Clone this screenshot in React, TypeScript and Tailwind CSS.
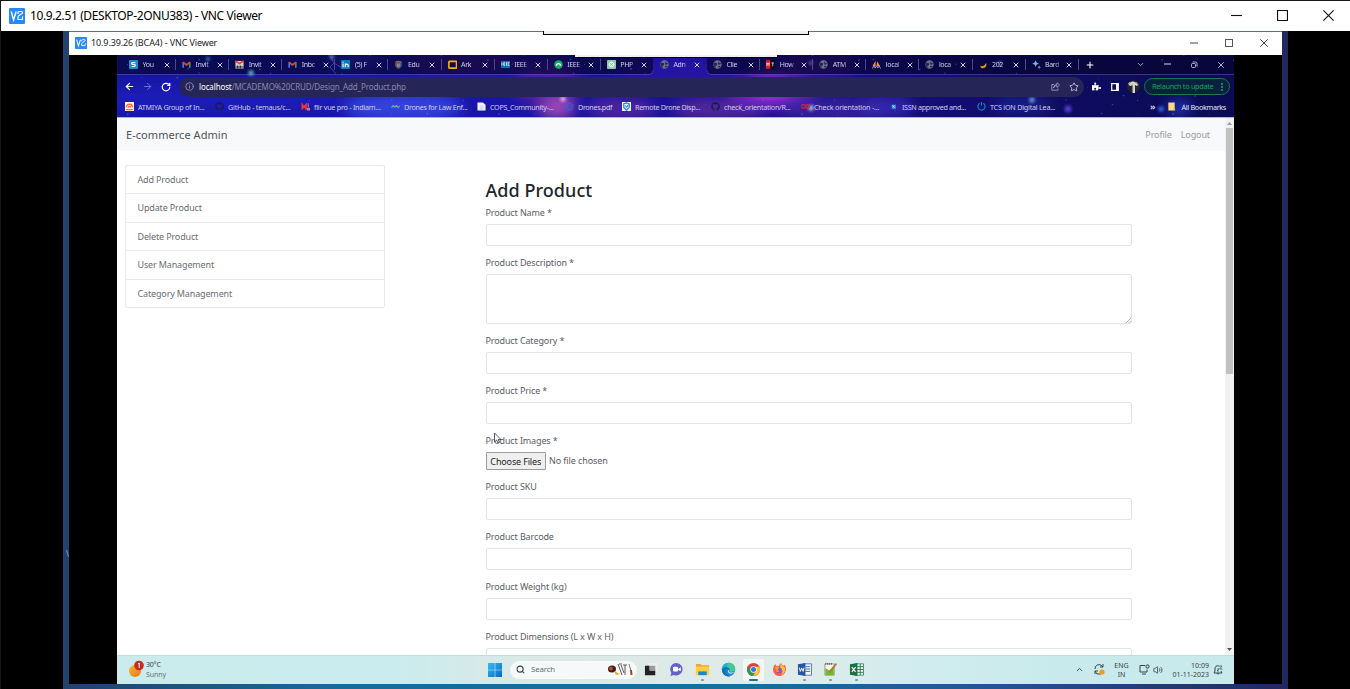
import React from "react";
import { ArrowLeft, ArrowRight, RotateCw, Info, Star, Plus, ChevronDown, ChevronUp, X, Search, MoreVertical, Volume2 } from "lucide-react";
import { FaPuzzlePiece, FaGithub } from "react-icons/fa";

const segoe = "font-['Noto_Sans',sans-serif]";

function VncLogo({ className }: { className: string }) {
  return (
    <svg viewBox="0 0 16 16" className={className}>
      <rect width="16" height="16" rx="1" fill="#2689f5" />
      <path d="M2.200 3.500l2.400 8.300L7.200 3.500" fill="none" stroke="#fff" strokeWidth="1.400" />
      <path d="M9 6V4.500q0-1 1-1h2.500q1 0 1 1t-1 1.300L10 7.500q-1 .6-1 1.700v2.300h4.500V8.500" fill="none" stroke="#fff" strokeWidth="1.200" />
    </svg>
  );
}

function WindowButtons({ className, size }: { className: string; size: number }) {
  return (
    <div className={className}>
      <svg width={size} height={size} viewBox="0 0 10 10"><path d="M0 5h10" stroke="#111" /></svg>
      <svg width={size} height={size} viewBox="0 0 10 10"><path d="M.5.5h9v9h-9z" fill="none" stroke="#111" /></svg>
      <svg width={size} height={size} viewBox="0 0 10 10"><path d="M.3.300l9.400 9.400M9.700.3L.3 9.700" stroke="#111" /></svg>
    </div>
  );
}

function Galaxy() {
  const stars = Array.from({ length: 170 }, (_, i) => ({
    x: (i * 197.3 + (i % 7) * 31) % 1117,
    y: (i * 29.7 + (i % 5) * 11) % 63,
    r: 0.3 + (i % 4) * 0.18,
  }));
  const clouds: [number, number, number, number, string, number][] = [
    [60, 45, 170, 22, "#2022c8", 0.5],
    [285, 52, 60, 22, "#4055f0", 0.7],
    [235, 5, 28, 12, "#3c46e8", 0.6],
    [348, 8, 60, 14, "#5a1c88", 0.6],
    [430, 30, 34, 34, "#6c28a8", 0.6],
    [440, 52, 18, 18, "#d060c0", 0.65],
    [505, 54, 35, 16, "#8438a8", 0.5],
    [560, 20, 60, 26, "#2c18a8", 0.7],
    [600, 54, 46, 16, "#6c30a0", 0.7],
    [655, 36, 44, 26, "#8a2cd0", 0.75],
    [655, 34, 20, 14, "#d850f0", 0.55],
    [700, 10, 40, 18, "#5a1ca0", 0.55],
    [715, 55, 50, 18, "#4a2ca8", 0.6],
    [770, 52, 26, 16, "#4030c0", 0.7],
    [905, 50, 30, 14, "#2030a8", 0.5],
    [1062, 53, 12, 10, "#3050f0", 0.7],
  ];
  const bright: [number, number, number, string][] = [
    [134, 18, 4, "#6cc8d0"], [91, 4, 3, "#4c98b0"], [215, 2, 3, "#8a98f0"], [446, 44, 4, "#f0b8e8"],
    [694, 53, 4, "#b8d8f0"], [694, 8, 3, "#6c60d8"], [915, 45, 4, "#78a8f0"], [951, 54, 5, "#6040e0"], [1044, 54, 4, "#3c70ff"], [883, 8, 3, "#5060b0"],
  ];
  return (
    <svg className="absolute inset-0 h-full w-full" viewBox="0 0 1117 63" preserveAspectRatio="none">
      <defs>
        <linearGradient id="sky">
          <stop offset="0" stopColor="#1517a0" />
          <stop offset=".3" stopColor="#1916a8" />
          <stop offset=".65" stopColor="#180f88" />
          <stop offset=".82" stopColor="#0f0c62" />
          <stop offset="1" stopColor="#0b0b54" />
        </linearGradient>
        <filter id="haze" x="-50%" y="-50%" width="200%" height="200%"><feGaussianBlur stdDeviation="7" /></filter>
        <filter id="glow" x="-100%" y="-100%" width="300%" height="300%"><feGaussianBlur stdDeviation="1.5" /></filter>
      </defs>
      <rect width="1117" height="63" fill="url(#sky)" />
      {clouds.map(([x, y, rx, ry, c, o], i) => <ellipse key={i} cx={x} cy={y} rx={rx} ry={ry * 0.7} fill={c} opacity={o} filter="url(#haze)" />)}
      <path d="M0 0H536V15q0 4-4 4H0zM590 0H1117V19H594q-4 0-4-4z" fill="#06052e" opacity=".66" />
      <path d="M0 19.500H532q4 0 4-4M590 15.500q0 4 4 4H1117" fill="none" stroke="#5b55a8" strokeWidth=".8" opacity=".7" />
      {stars.map((s, i) => <circle key={i} cx={s.x} cy={s.y} r={s.r} fill="#9ca4ff" opacity=".34" />)}
      {bright.map(([x, y, r, c], i) => <circle key={i} cx={x} cy={y} r={r * 0.7} fill={c} filter="url(#glow)" opacity=".85" />)}
      <path d="M212 0l5 8-4 4 6 7M217 8l8 5" stroke="#5264e8" strokeWidth="1" fill="none" opacity=".6" />
    </svg>
  );
}

function Favicon({ kind }: { kind: string }) {
  const body: Record<string, React.ReactNode> = {
    s: <><rect width="10" height="10" rx="1" fill="#168dcc" /><path d="M7 3H4Q2.800 3 3 4t1.200 1h1.600Q7 5 7 6T5.800 7.200H3" fill="none" stroke="#fff" strokeWidth="1.300" /></>,
    gmail: <><path d="M1.300 8.500V2.500" stroke="#4285f4" strokeWidth="1.700" /><path d="M8.700 8.500V2.500" stroke="#34a853" strokeWidth="1.700" /><path d="M1 2.500L5 5.600l4-3.100" fill="none" stroke="#ea4335" strokeWidth="1.900" /></>,
    mail2: <><rect x=".5" y="1" width="9" height="8.500" fill="#d4cfcb" /><path d="M.5 1L5 4 9.500 1" fill="none" stroke="#e33b2e" strokeWidth="1.800" /><path d="M.5 7.700h9M3 6v3.500M6 6v3.500" stroke="#333" strokeWidth="1.200" /></>,
    linkedin: <><rect width="10" height="10" rx=".7" fill="#0a7bbd" /><path d="M2.300 4v4M2.300 2v1M4.800 8V4M4.800 6Q5 4.500 6.500 4.500T8 6v2" stroke="#fff" strokeWidth="1.300" fill="none" /></>,
    edu: <><path d="M1 2l4-1.500L9 2v4q-1 3-4 4Q2 9 1 6z" fill="#454967" /><path d="M3 4h2v5L3 7z" fill="#ef7635" /><path d="M5 4h2v3L5 9z" fill="#29a6e0" /><path d="M2 2h6" stroke="#d16c46" /></>,
    slide: <rect x="1" y="1.500" width="8.500" height="7.500" rx=".5" fill="none" stroke="#f4b400" strokeWidth="1.800" />,
    ieee: <><rect y="1" width="10" height="8" fill="#0a6eae" /><path d="M1 3v3M3 3v3M3 3h1.500M3 4.500h1.500M3 6h1.500M6 3v3M6 3h1.200M6 6h1.200M8 3v3M8 3h1.500M8 6h1.500" stroke="#fff" strokeWidth=".8" /></>,
    green: <><circle cx="5" cy="5" r="4.700" fill="#0cae62" /><path d="M2.700 6.300a2.300 2.300 0 014.600 0" stroke="#fff" strokeWidth="1.600" fill="none" /></>,
    gpt: <><rect width="10" height="10" rx="1" fill="#8cc9ad" /><circle cx="5" cy="5" r="2.700" fill="#cfe8dc" stroke="#f2fff8" /><path d="M3 3l4 4M7 3L3 7" stroke="#79b59b" strokeWidth=".6" /></>,
    globe: <><circle cx="5" cy="5" r="4.600" fill="#6d7390" /><path d="M1 3l2.500 0 1.500 1.200L4 6l-1.500.5L3.500 9Q1 8 .8 5zM5.500 1l1 1.800L9 3.500 8 5l-2 .3zM5.500 7l2-.5L8.500 7 6.500 9z" fill="#25264a" /></>,
    mt: <><path fill="#e10d1c" d="M0 0h5v10H0z" /><path fill="#090909" d="M5 0h5v10H5z" /><path d="M1 7V3l1.200 2L3.500 3v4M6 3.300h3M7.500 3.300V7" stroke="#fff" strokeWidth=".8" fill="none" /></>,
    pma: <><path d="M.5 7L4 .8V7zM5 7l.8-5.500L9 7z" fill="#f29a24" /><path d="M.5 9.500L2 6.500l1.500 2.500L5 6.500 6.500 9 8 6.500l1.500 3" stroke="#99a1d1" fill="none" /></>,
    moon: <path d="M1 6q4 3 7-3 1 5-3 6Q2 9.500 1 6z" fill="#f69716" />,
    bard: <><path d="M4 0q.5 3.500 4 4-3.500.5-4 4-.5-3.500-4-4 3.500-.5 4-4z" fill="#7db0ff" /><path d="M8 6q.3 1.700 2 2-1.700.3-2 2-.3-1.700-2-2 1.700-.3 2-2z" fill="#e56ba0" /></>,
    atm: <><rect width="10" height="10" fill="#fff3ea" /><path d="M1.500 6a3.500 3.500 0 017 0M3.500 6.500a1.500 1.500 0 013 0M1 8.500h8" fill="none" stroke="#f0703c" strokeWidth="1.400" /></>,
    m: <><path d="M1.500 8.500V3l2 2.500 2-2.500v5.500" fill="none" stroke="#e33" strokeWidth="2" /><path d="M8 1.500v4.500M7 7h2.500v2H7z" stroke="#f6b0b0" strokeWidth=".8" fill="#d22" /></>,
    wave: <><path d="M.5 6L2.500 4l2 2" stroke="#2fc4a8" strokeWidth="1.500" fill="none" /><path d="M4.500 5.500l1.500-1.500 1.500 1.500" stroke="#e28a58" strokeWidth="1.500" fill="none" /><path d="M7 5l1 1.200 1.700-2" stroke="#379cf0" strokeWidth="1.500" fill="none" /></>,
    doc: <><path d="M.5.5h6l3 2.500v6.500h-9z" fill="#f1f1fa" /><path d="M3 4h4v5H3z" fill="#d7dbf4" /></>,
    sun: <><circle cx="5" cy="5" r="3.600" fill="none" stroke="#2f6fe7" strokeWidth="2" strokeDasharray="1 1.200" /><circle cx="5" cy="5" r="1.600" fill="none" stroke="#2f5fd7" /></>,
    shield: <><rect width="10" height="10" fill="#eaf4ff" /><path d="M2 2l3-1 3 1v4L5 9 2 6z" fill="none" stroke="#167fe0" strokeWidth="1.300" /><path d="M4 4l1 2 2-3" stroke="#145080" fill="none" /></>,
    co: <><circle cx="2.800" cy="5" r="2" fill="none" stroke="#d8232e" strokeWidth="1.300" /><circle cx="7.200" cy="5" r="2" fill="none" stroke="#d8232e" strokeWidth="1.300" /></>,
    cube: <><path d="M3 3h4.500v4.500H3z" fill="#34a7d2" /><path d="M4 4l2 2" stroke="#d5ffff" /></>,
    power: <path d="M3 1.500a4 4 0 104 0M5 0v4" stroke="#0d7ed0" strokeWidth="1.300" fill="none" />,
    folder: <><path d="M1.500.5h7v7l-1 2h-6z" fill="#fbdc82" /><path d="M7 7h2v2.500H7z" fill="#ecbc4d" /></>,
  };
  if (kind === "github") return <FaGithub className="size-[9px] shrink-0 text-[#1c1b4c]" />;
  return <svg viewBox="0 0 10 10" className="size-[9px] shrink-0">{body[kind]}</svg>;
}

const tabs: [string, string][] = [
  ["s", "You"], ["gmail", "Invit"], ["mail2", "Invit"], ["gmail", "Inbc"], ["linkedin", "(5) F"], ["edu", "Edu"], ["slide", "Ark"],
  ["ieee", "IEEE"], ["green", "IEEE"], ["gpt", "PHP"], ["globe", "Adn"], ["globe", "Clie"], ["mt", "How"], ["globe", "ATM"],
  ["pma", "local"], ["globe", "loca"], ["moon", "202"], ["bard", "Bard"],
];

const bookmarks: [string, string, string, string][] = [
  ["atm", "ATMIYA Group of In...", "w-[90px]", "tracking-[-0.25px]"],
  ["github", "GitHub - temaus/c...", "w-[86px]", "tracking-[-0.23px]"],
  ["m", "flir vue pro - Indiam...", "w-[90px]", "tracking-[-0.25px]"],
  ["wave", "Drones for Law Enf...", "w-[86px]", "tracking-[-0.3px]"],
  ["doc", "COPS_Community-...", "w-[88px]", "tracking-[-0.3px]"],
  ["sun", "Drones.pdf", "w-[57px]", "tracking-[-0.35px]"],
  ["shield", "Remote Drone Disp...", "w-[89px]", "tracking-[-0.33px]"],
  ["github", "check_orientation/R...", "w-[90px]", "tracking-[-0.29px]"],
  ["co", "Check orientation -...", "w-[88px]", "tracking-[-0.2px]"],
  ["cube", "ISSN approved and...", "w-[88px]", "tracking-[-0.32px]"],
  ["power", "TCS iON Digital Lea...", "w-[90px]", "tracking-[-0.23px]"],
];

function BrowserChrome() {
  return (
    <div className="relative h-[63px] overflow-hidden text-[#cfceea]">
      <Galaxy />
      <div className="relative flex h-full flex-col">
        <div className="flex h-[19px] items-center pl-[6px]">
          {tabs.map(([icon, label], i) => (
            <div key={i} className="relative flex h-full w-[53.100px] shrink-0 items-center pl-[6px]">
              <Favicon kind={icon} />
              <span className="ml-[4.500px] w-[16px] whitespace-nowrap text-[7px] leading-[12px] tracking-[-0.350px] [mask-image:linear-gradient(90deg,#000_60%,rgba(0,0,0,.25))]">{label}</span>
              <X className="ml-[4px] size-[8px] shrink-0" strokeWidth={3} />
              {i !== 9 && i !== 10 && <span className="absolute right-0 top-[4px] h-[11px] w-px bg-[#48488a]" />}
            </div>
          ))}
          <Plus className="ml-[6px] size-[10px] text-white" strokeWidth={2.500} />
          <ChevronDown className="ml-[41px] size-[9px]" />
          <svg className="ml-[19px] size-[7px]" viewBox="0 0 7 7"><path d="M0 3h7" stroke="#d6d5f0" /></svg>
          <svg className="ml-[19px] size-[8px]" viewBox="0 0 8 8"><rect x="1.500" y="2.500" width="4" height="4" rx="1" fill="none" stroke="#d6d5f0" strokeWidth=".8" /><path d="M2.500 1H5.500q1.500 0 1.500 1.500v3" fill="none" stroke="#d6d5f0" strokeWidth=".8" /></svg>
          <X className="ml-[18px] size-[10px]" />
        </div>
        <div className="mt-[2px] flex h-[21px] items-center pl-[7px]">
          <ArrowLeft className="size-[11px] text-white" strokeWidth={2.500} />
          <ArrowRight className="ml-[7px] size-[11px] text-[#6f76d8]" />
          <RotateCw className="ml-[8px] size-[10px] text-white" strokeWidth={3} />
          <div className="ml-[8px] flex h-[20px] w-[905px] items-center rounded-full bg-[#252558] pl-[6px] pr-[5px]">
            <Info className="size-[9px] text-[#a5a3c5]" />
            <span className="ml-[5px] text-[8px] tracking-[-0.130px] text-[#8987b0]"><span className="text-white">localhost</span>/MCADEMO%20CRUD/Design_Add_Product.php</span>
            <svg className="ml-auto size-[9px]" viewBox="0 0 9 9"><path d="M3 2.500H.8v5.700H7V6.500M2.500 6Q3 3.500 6 3.500V5.500L8.600 3 6 .8v1.400Q3 2.500 2.500 6z" fill="none" stroke="#aaa8c8" strokeWidth=".8" /></svg>
            <Star className="ml-[9px] size-[10px]" />
          </div>
          <FaPuzzlePiece className="ml-[8px] size-[9px] text-white" />
          <svg className="ml-[10px] size-[8px]" viewBox="0 0 8 8"><path d="M.7.7h6.600v6.600H.7z" fill="none" stroke="#fff" strokeWidth="1.200" /><path d="M5 1h2v6H5z" fill="#fff" /></svg>
          <svg className="ml-[8px] size-[13px]" viewBox="0 0 13 13"><circle cx="6.500" cy="6.500" r="6.300" fill="#252525" /><path d="M1.500 5Q3 1 6.500 1.500T11.500 5L9.500 6 8 5v8H5.500V5L3.500 6z" fill="#d2d2d2" /><path d="M1 4l2-2M9 2l2 3" stroke="#999" /></svg>
          <div className="ml-[4px] flex h-[17px] w-[86px] items-center rounded-full border border-[#1d7650] bg-[#08213c] pl-[7px] pr-[2px] text-[7.300px] text-[#22a05c]">
            <span className="whitespace-nowrap tracking-[-0.300px]">Relaunch to update</span>
            <MoreVertical className="ml-auto size-[10px]" strokeWidth={3} />
          </div>
        </div>
        <div className="flex h-[20px] items-center pl-[8px] text-[7.200px]">
          {bookmarks.map(([icon, label, w, tracking], i) => (
            <div key={i} className={`flex shrink-0 items-center gap-[4px] whitespace-nowrap ${w} ${tracking}`}>
              <Favicon kind={icon} /><span>{label}</span>
            </div>
          ))}
          <span className="ml-auto text-[9px] font-bold leading-[10px]">»</span>
          <span className="ml-[11px] mr-[8px] flex items-center gap-[6px] whitespace-nowrap tracking-[-0.300px] text-[#e6e5f6]"><Favicon kind="folder" />All Bookmarks</span>
        </div>
      </div>
      <div className="absolute inset-x-0 bottom-0 h-px bg-[#aeb0da]" />
    </div>
  );
}

function Label({ children }: { children: React.ReactNode }) {
  return <label className="block h-[16px] whitespace-nowrap text-[9px] leading-[16px] tracking-[-0.130px] text-[#5a6066]">{children}</label>;
}

function Field({ label, area }: { label: string; area?: boolean }) {
  return (
    <div className={area ? "h-[78px]" : "h-[50px]"}>
      <Label>{label}</Label>
      {area ? (
        <div className="relative mt-[3px] h-[50px] rounded-[2px] border border-[#e2e5e8] bg-white">
          <svg className="absolute bottom-0 right-0 size-[5px]" viewBox="0 0 6 6"><path d="M0 6l6-6M3 6l3-3" stroke="#888" strokeWidth=".8" /></svg>
        </div>
      ) : (
        <div className="mt-[3px] h-[22px] rounded-[2px] border border-[#e2e5e8] bg-white" />
      )}
    </div>
  );
}

function Page() {
  return (
    <div className="flex h-[537px] bg-white">
      <div className="relative min-w-0 flex-1 overflow-hidden">
        <header className="flex h-[33px] items-center bg-[#f8f9fa] pl-[9px] pr-[15px] pt-px">
          <span className="pt-px text-[11px] tracking-[0.050px] text-[#505458]">E-commerce Admin</span>
          <nav className="ml-auto flex gap-[9px] text-[9px] tracking-[-0.120px] text-[#989b9e]"><span>Profile</span><span>Logout</span></nav>
        </header>
        <div className="flex">
          <aside className="ml-[8px] mt-[14px] h-[143px] w-[260px] rounded-[2px] border border-[#e8e9ea]">
            {["Add Product", "Update Product", "Delete Product", "User Management", "Category Management"].map((t, i) => (
              <div key={t} className={`pl-[11.500px] text-[9px] leading-[27px] tracking-[-0.150px] text-[#6a6e73] ${i ? "h-[28.500px] border-t border-[#e9eaeb]" : "h-[27px]"}`}>{t}</div>
            ))}
          </aside>
          <main className="ml-[100.500px] mt-[26px] w-[646.500px]">
            <h1 className="h-[28px] text-[18px] font-medium leading-[27px] tracking-[0.050px] text-[#212529]">Add Product</h1>
            <Field label="Product Name *" />
            <Field label="Product Description *" area />
            <Field label="Product Category *" />
            <Field label="Product Price *" />
            <div className="h-[46px]">
              <Label>Product Images *</Label>
              <div className="mt-[3px] flex items-center text-[9px]">
                <button className="h-[18px] w-[60.500px] whitespace-nowrap rounded-[1px] border border-[#9c9c9c] bg-[#efefef] leading-[15px] tracking-[-0.150px] text-[#222]">Choose Files</button>
                <span className="ml-[3px] tracking-[-0.100px] text-[#5a6066]">No file chosen</span>
              </div>
            </div>
            <Field label="Product SKU" />
            <Field label="Product Barcode" />
            <Field label="Product Weight (kg)" />
            <Field label="Product Dimensions (L x W x H)" />
          </main>
        </div>
        <svg className="absolute left-[376px] top-[314px] h-[13px] w-[10px]" viewBox="0 0 10 13"><path d="M1.500 1v9l2.200-2 1.300 3 1.500-.7L5.200 7.500H8z" fill="#fff" stroke="#333" strokeWidth=".8" /></svg>
      </div>
      <div className="flex w-[9px] flex-col items-center bg-[#f1f1f1]">
        <svg className="h-[10px] w-[5px]" viewBox="0 0 5 10"><path d="M0 7l2.500-3L5 7z" fill="#999" /></svg>
        <div className="h-[246px] w-[7px] bg-[#c1c1c1]" />
        <svg className="mt-auto h-[10px] w-[5px]" viewBox="0 0 5 10"><path d="M0 3l2.500 3L5 3z" fill="#555" /></svg>
      </div>
    </div>
  );
}

function AppIcon({ kind }: { kind: string }) {
  const icons: Record<string, React.ReactNode> = {
    task: <><path d="M5 1h10v9H5z" fill="#eceeee" /><path d="M1 4h5v5h6v5H1z" fill="#222" /><path d="M6 4h6v5H6z" fill="#9c9c9c" /></>,
    chat: <><path d="M8 1a6.700 6.700 0 11-3 12.800L1.500 15l1-3.500A6.700 6.700 0 018 1z" fill="#6460c8" /><rect x="4.300" y="5" width="5.300" height="5" rx="1" fill="#fff" /><path d="M9.600 7.500l3-2v4.300l-3-1.500z" fill="#fff" /></>,
    files: <><path d="M1 2h5l1.500 1.500H15v10H1z" fill="#f1a91f" /><path d="M1 5h14v9H1z" fill="#ffce45" /><path d="M3.500 10h9v4h-9z" fill="#1787d4" /></>,
    edge: <><circle cx="8" cy="8" r="7.200" fill="#1689cf" /><path d="M1 7a7.200 7.200 0 0114-1q1 4-3.500 4.500-3 0-2.500-1 1-3-2-4-4-1-6 1.500z" fill="#45ca91" /><path d="M1 7Q2 1.500 8 1q-3 3 0 5Q4 4 1 7z" fill="#22aedb" /><path d="M5 8q-1 6 5.500 6.800Q4 17 1.500 11 0 6 5 5.500q4 0 4 3Q5 6 5 8z" fill="#0874b9" /><path d="M8.300 8.500q-.5 4 6 2.200Q11 14 8 11.500 6.500 9 8.300 8.500z" fill="#d7e9e7" /></>,
    chrome: <><circle cx="8" cy="8" r="7" fill="#e44134" /><path d="M2 4.500A7 7 0 007.500 15L11 9H4.800z" fill="#279b54" /><path d="M8 5h6.400A7 7 0 017.500 15l3.300-6z" fill="#f9c52c" /><circle cx="8" cy="8" r="3.400" fill="#fff" /><circle cx="8" cy="8" r="2.700" fill="#3579e6" /></>,
    firefox: <><path d="M2 4l2-2v2l3 .2L9.500 1q.5 2 3 3l1-1Q16 7 14 11q-2 4-6 4-5 0-6.500-4.500Q.5 7 2 4z" fill="#ff5a45" /><path d="M9.500 1q.5 3 3 4t1 5q-1 3-4 4 4-5-1-8z" fill="#ffc736" /><circle cx="7.300" cy="8.700" r="3.100" fill="#8952d8" /><path d="M3 5q2-1 5 1L6 8l2 2-3 1z" fill="#ff9432" /></>,
    word: <><rect x="7" y="2" width="8.500" height="12" fill="#f5f7fc" stroke="#2e5aa8" strokeWidth=".8" /><path d="M9 5h5M9 7.500h5M9 10h5" stroke="#3564b2" /><path d="M1 2.500L9 1v14l-8-1.500z" fill="#2855a4" /><path d="M2.500 6l1 4L5 6.500 6.500 10l1-4" stroke="#fff" fill="none" /></>,
    note: <><path d="M2 2h10v12H2z" fill="#f4f4e6" stroke="#777" strokeWidth=".7" /><path d="M2.500 6.500l4 2.500 5-3v8h-9z" fill="#73ba29" /><path d="M6 12l1-3 6.500-8 1.500 1.500L8 11z" fill="#a87a3c" /><path d="M3 1v2M5 1v2M7 1v2M9 1v2" stroke="#444" strokeWidth=".8" /></>,
    excel: <><rect x="7" y="2" width="8.500" height="12" fill="#f4faf5" stroke="#227548" strokeWidth=".8" /><path d="M8 5h7M8 8h7M8 11h7M12 2v12" stroke="#25794a" /><path d="M1 2.500L9 1v14l-8-1.500z" fill="#1b7143" /><path d="M3 5.500l4 5M7 5.500l-4 5" stroke="#fff" strokeWidth="1.200" /></>,
  };
  return <svg viewBox="0 0 16 16" className="size-[15px]">{icons[kind]}</svg>;
}

function Taskbar() {
  return (
    <footer className="flex h-[29px] items-center border-t border-[#bddcdd] bg-[linear-gradient(90deg,#cbebed_0%,#cbecee_25%,#dce8e5_38%,#e0ece9_60%,#d2ecef_70%,#c8eaec_85%)] pb-px text-[#394446]">
      <div className="flex w-[371px] items-center pl-[11px]">
        <svg className="mb-[3px] h-[19px] w-[17px]" viewBox="0 0 17 19">
          <defs><linearGradient id="sunny" x1="0" y1="0" x2="1" y2="1"><stop stopColor="#f8b62a" /><stop offset="1" stopColor="#ee7515" /></linearGradient></defs>
          <circle cx="7" cy="12" r="6" fill="url(#sunny)" /><circle cx="11" cy="6.500" r="4.800" fill="#c42b22" /><path d="M10 5l1.200-1v5" fill="none" stroke="#fff" />
        </svg>
        <div className="ml-px text-[7px] leading-[9.500px]"><div className="tracking-[-0.200px]">30°C</div><div className="tracking-[-0.100px] text-[#657577]">Sunny</div></div>
      </div>
      <svg className="size-[14px]" viewBox="0 0 14 14">
        <defs><linearGradient id="win" x1="0" y1="0" x2="1" y2="1"><stop stopColor="#33bdf0" /><stop offset="1" stopColor="#0768c4" /></linearGradient></defs>
        <path d="M0 0h6.700v6.700H0zM7.300 0H14v6.700H7.300zM0 7.300h6.700V14H0zM7.300 7.300H14V14H7.300z" fill="url(#win)" />
      </svg>
      <div className="ml-[8px] flex h-[18px] w-[127px] items-center rounded-full bg-[#f5f9f8] pl-[6px] pr-[4px]">
        <Search className="size-[9px]" strokeWidth={2.800} />
        <span className="ml-[6px] text-[7.800px] tracking-[-0.100px] text-[#667073]">Search</span>
        <svg className="ml-auto h-[15px] w-[26px]" viewBox="0 0 26 15">
          <ellipse cx="5" cy="7" rx="4" ry="3.500" fill="#30221e" /><circle cx="4" cy="6.500" r="2" fill="#c44624" /><path d="M7 9l6 3-4 1z" fill="#e2af38" /><path d="M11 2l4 11M12 2h3M14 3l3 8M18 3v10M16 3h4" stroke="#65594f" fill="none" /><path d="M22 2l2 7" stroke="#777" /><path d="M24 8l.5 5" stroke="#ac3a2e" strokeWidth="2" />
        </svg>
      </div>
      <div className="ml-[1.500px] flex">
        {["task", "chat", "files", "edge", "chrome", "firefox", "word", "note", "excel"].map((k) => (
          <div key={k} className={`relative mx-[2px] flex h-[22px] w-[21.600px] shrink-0 items-center justify-center rounded-[2px] ${k === "chrome" ? "bg-[#f2f7f5]" : ""}`}>
            <AppIcon kind={k} />
            {["files", "word", "note", "excel"].includes(k) && <span className="absolute bottom-0 h-[2px] w-[3px] rounded-full bg-[#849698]" />}
            {k === "chrome" && <span className="absolute bottom-0 h-[2px] w-[9px] rounded-full bg-[#16798b]" />}
          </div>
        ))}
      </div>
      <div className="ml-auto flex items-center pr-[11px] text-[7px] leading-[9px]">
        <ChevronUp className="size-[9px]" strokeWidth={2.500} />
        <svg className="ml-[10px] size-[11px]" viewBox="0 0 11 11"><path d="M1 5a4 4 0 017-3l1 1M9 0v3H6M1 7l2 3h4M1 10V7h3" fill="none" stroke="#394446" strokeWidth="1" /><circle cx="8" cy="8" r="2.600" fill="#ff990d" /></svg>
        <div className="ml-[9px] w-[15px] text-center"><div>ENG</div><div>IN</div></div>
        <svg className="ml-[10px] size-[11px]" viewBox="0 0 11 11"><path d="M6 1.500H1v6.500h7V5.500M3 10h4" fill="none" stroke="#394446" /><rect x="7" y="1" width="3" height="3" rx="1" fill="none" stroke="#394446" /></svg>
        <Volume2 className="ml-[3px] size-[10px]" />
        <div className="ml-[9px] w-[37px] whitespace-nowrap text-right"><div>10:09</div><div>01-11-2023</div></div>
        <svg className="ml-[4px] size-[10px]" viewBox="0 0 10 10"><path d="M6 1Q2 0 2 4v2L1 8h8L8 6M4 8.500q1 1 2 0" fill="none" stroke="#394446" /><path d="M6 1h3L6.500 4H9.500M4 4h2L4 6h2" fill="none" stroke="#394446" strokeWidth=".7" /></svg>
      </div>
    </footer>
  );
}

export default function App() {
  return (
    <div className={`relative flex h-[689px] w-[1350px] flex-col overflow-hidden border-l border-t border-[#171717] bg-black ${segoe}`}>
      <div className="flex h-[30px] shrink-0 items-center bg-white pb-px pl-[8px]">
        <VncLogo className="size-[16px]" />
        <span className="ml-[5px] whitespace-nowrap text-[12px] tracking-[-0.380px] text-black">10.9.2.51 (DESKTOP-2ONU383) - VNC Viewer</span>
        <WindowButtons className="ml-auto mr-[16px] flex gap-[35px]" size={11} />
      </div>
      <div className="flex min-h-0 flex-1">
        <div className="w-[62px] shrink-0" />
        <div className="flex w-[1225px] flex-col bg-[linear-gradient(90deg,#23416d_0%,#176b99_22%,#177199_55%,#255394_76%,#22285f_100%)] px-[6px]">
          <div className="flex h-[24px] items-center border-t border-[#5d7378] bg-white pb-px pl-[6px]">
            <VncLogo className="size-[12px]" />
            <span className="ml-[4px] whitespace-nowrap text-[9px] tracking-[-0.120px] text-[#222]">10.9.39.26 (BCA4) - VNC Viewer</span>
            <WindowButtons className="ml-auto mr-[14px] flex gap-[27px]" size={8} />
          </div>
          <div className="flex h-[629px] bg-black pl-[48px]">
            <div className="w-[1117px] shrink-0">
              <BrowserChrome />
              <Page />
              <Taskbar />
            </div>
          </div>
        </div>
      </div>
      <div className="absolute left-[542px] top-[30px] h-[4px] w-[266px] border-x border-b border-black bg-[#f0f0f0]" />
      <div className="absolute left-[574px] top-[54px] h-[3px] w-[202px] border-b border-black bg-[#f0f0f0]" />
      <span className="absolute left-[65px] top-[547px] text-[8px] text-[#a5a5a5]">\</span>
    </div>
  );
}
